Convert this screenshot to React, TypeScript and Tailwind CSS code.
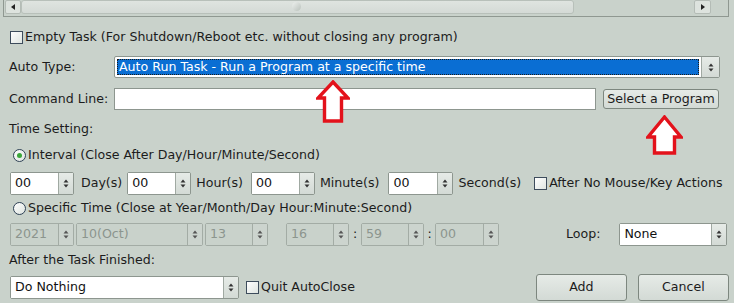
import React from "react";

const Arrows = ({ color = "#333" }: { color?: string }) => (
  <svg width="6" height="9" viewBox="0 0 6 9">
    <path d="M3 0.5 L5.5 3.5 L0.5 3.5 Z" fill={color} />
    <path d="M3 8.5 L5.5 5.5 L0.5 5.5 Z" fill={color} />
  </svg>
);

function Spin({ value, w, disabled = false }: { value: string; w: string; disabled?: boolean }) {
  return (
    <div
      className={`flex h-[23px] shrink-0 ${w} rounded-[2px] border ${
        disabled ? "border-[#a3aca5]" : "border-[#8d968f]"
      }`}
    >
      <div
        className={`flex-1 flex items-center pl-[4px] ${
          disabled ? "bg-[#c9d2cb] text-[#8c958e]" : "bg-white text-[#111]"
        }`}
      >
        {value}
      </div>
      <div
        className={`w-[15px] flex items-center justify-center border-l ${
          disabled ? "border-[#a3aca5] bg-[#ccd4ce]" : "border-[#a0a9a2] bg-gradient-to-b from-[#e6ebe7] to-[#d3dad5]"
        }`}
      >
        <Arrows color={disabled ? "#555" : "#333"} />
      </div>
    </div>
  );
}

function Check({ className = "" }: { className?: string }) {
  return (
    <div
      className={`w-[13px] h-[13px] shrink-0 border border-[#3d4c5c] bg-gradient-to-br from-[#ffffff] to-[#dfe5e1] ${className}`}
    />
  );
}

function Radio({ checked }: { checked?: boolean }) {
  return (
    <div className="w-[13px] h-[13px] shrink-0 rounded-full border border-[#2f4256] bg-gradient-to-br from-white to-[#dde3df] flex items-center justify-center">
      {checked && <div className="w-[5px] h-[5px] rounded-full bg-[#3aa63a]" />}
    </div>
  );
}

function RedArrow({ w, h, shaft, head }: { w: number; h: number; shaft: number; head: number }) {
  const s = 2;
  const cx = w / 2;
  const l = cx - shaft / 2;
  const r = cx + shaft / 2;
  const d = `M${cx} ${s} L${w - s} ${head} L${r} ${head} L${r} ${h - s} L${l} ${h - s} L${l} ${head} L${s} ${head} Z`;
  return (
    <svg width={w} height={h} viewBox={`0 0 ${w} ${h}`}>
      <path d={d} fill="white" stroke="#e3121b" strokeWidth="3.4" strokeLinejoin="miter" />
    </svg>
  );
}

export default function App() {
  return (
    <div className="relative w-[734px] h-[303px] overflow-hidden bg-[#c9d2cb] text-[12.6px] leading-none text-[#1c1c1c] font-['DejaVu_Sans',sans-serif]">
      {/* top scrollbar frame */}
      <div className="ml-[3px] w-[726px] h-[17px] border-l border-r border-b border-[#8f9891] flex">
        <div className="flex h-[15px] w-[718px] ml-[1px]">
          <div className="w-[16px] h-[14px] bg-[#dde3de] border border-[#b4bcb6] rounded-[2px] flex items-center justify-center">
            <svg width="4" height="6" viewBox="0 0 4 6"><path d="M0 3 L4 0 L4 6 Z" fill="#222" /></svg>
          </div>
          <div className="w-[553px] h-[14px] bg-gradient-to-b from-[#dfe4e0] to-[#d4dad6] border border-[#b8c0ba] rounded-[3px] relative">
            <div className="absolute left-[270px] top-[1px] w-[9px] h-[9px] rounded-full bg-gradient-to-br from-[#eef1ef] to-[#b9c1bb]" />
          </div>
          <div className="w-[120px]" />
          <div className="w-[17px] h-[14px] bg-[#dde3de] border border-[#b4bcb6] rounded-[2px] flex items-center justify-center">
            <svg width="4" height="6" viewBox="0 0 4 6"><path d="M4 3 L0 0 L0 6 Z" fill="#222" /></svg>
          </div>
        </div>
      </div>

      {/* Empty task */}
      <div className="flex items-center mt-[13px] ml-[10px] h-[15px]">
        <Check />
        <span className="ml-[2px]">Empty Task (For Shutdown/Reboot etc. without closing any program)</span>
      </div>

      {/* Auto type */}
      <div className="flex items-center mt-[11px] h-[22px]">
        <span className="w-[114px] pl-[9px]">Auto Type:</span>
        <div className="flex w-[606px] h-[22px] border border-[#8d968f] rounded-[2px] bg-white">
          <div className="flex-1 p-[2px]">
            <div className="h-full border border-dotted border-[#1a1a1a] bg-[#0a6ed3] text-white flex items-center pl-[1px]">
              Auto Run Task - Run a Program at a specific time
            </div>
          </div>
          <div className="w-[18px] flex items-center justify-center border-l border-[#a0a9a2] bg-gradient-to-b from-[#e6ebe7] to-[#d3dad5]">
            <Arrows />
          </div>
        </div>
      </div>

      {/* Command line */}
      <div className="flex items-center mt-[10px] h-[22px]">
        <span className="w-[114px] pl-[9px]">Command Line:</span>
        <div className="w-[482px] h-[22px] border border-[#8d968f] bg-white" />
        <div className="ml-[7px] w-[116px] h-[20px] border border-[#7d877f] rounded-[3px] bg-gradient-to-b from-[#e6ebe7] to-[#d3dad5] flex items-center justify-center">
          Select a Program
        </div>
      </div>

      {/* Time setting */}
      <div className="mt-[12px] ml-[9px] h-[15px] flex items-center">Time Setting:</div>

      <div className="flex items-center mt-[11px] ml-[13px] h-[15px]">
        <Radio checked />
        <span className="ml-[2px]">Interval (Close After Day/Hour/Minute/Second)</span>
      </div>

      <div className="flex items-center mt-[9px] ml-[10px] h-[23px]">
        <Spin value="00" w="w-[64px]" />
        <span className="ml-[7px]">Day(s)</span>
        <div className="ml-[5px]"><Spin value="00" w="w-[64px]" /></div>
        <span className="ml-[5px]">Hour(s)</span>
        <div className="ml-[8px]"><Spin value="00" w="w-[64px]" /></div>
        <span className="ml-[5px]">Minute(s)</span>
        <div className="ml-[9px]"><Spin value="00" w="w-[65px]" /></div>
        <span className="ml-[5px]">Second(s)</span>
        <Check className="ml-[13px]" />
        <span className="ml-[2px]">After No Mouse/Key Actions</span>
      </div>

      <div className="flex items-center mt-[6px] ml-[13px] h-[15px]">
        <Radio />
        <span className="ml-[2px]">Specific Time (Close at Year/Month/Day Hour:Minute:Second)</span>
      </div>

      <div className="flex items-center mt-[7px] ml-[10px] h-[23px]">
        <Spin value="2021" w="w-[64px]" disabled />
        <div className="ml-[2px]"><Spin value="10(Oct)" w="w-[127px]" disabled /></div>
        <div className="ml-[2px]"><Spin value="13" w="w-[63px]" disabled /></div>
        <div className="ml-[18px]"><Spin value="16" w="w-[63px]" disabled /></div>
        <span className="w-[12px] text-center">:</span>
        <Spin value="59" w="w-[63px]" disabled />
        <span className="w-[11px] text-center">:</span>
        <Spin value="00" w="w-[64px]" disabled />
        <span className="ml-[67px]">Loop:</span>
        <div className="ml-[19px]"><Spin value="None" w="w-[108px]" /></div>
      </div>

      <div className="mt-[7px] ml-[9px] h-[15px] flex items-center">After the Task Finished:</div>

      <div className="flex items-center mt-[6px] ml-[10px] h-[27px]">
        <div className="flex items-center">
          <Spin value="Do Nothing" w="w-[229px]" />
          <Check className="ml-[7px]" />
          <span className="ml-[2px]">Quit AutoClose</span>
        </div>
        <div className="ml-[181px] w-[91px] h-[27px] border border-[#7d877f] rounded-[3px] bg-gradient-to-b from-[#e6ebe7] to-[#d3dad5] flex items-center justify-center">
          Add
        </div>
        <div className="ml-[11px] w-[91px] h-[27px] border border-[#7d877f] rounded-[3px] bg-gradient-to-b from-[#e6ebe7] to-[#d3dad5] flex items-center justify-center">
          Cancel
        </div>
      </div>

      {/* red annotation arrows */}
      <div className="absolute left-[316px] top-[80px]"><RedArrow w={34} h={43} shaft={17} head={18} /></div>
      <div className="absolute left-[646px] top-[115px]"><RedArrow w={37} h={40} shaft={20} head={22} /></div>
    </div>
  );
}
